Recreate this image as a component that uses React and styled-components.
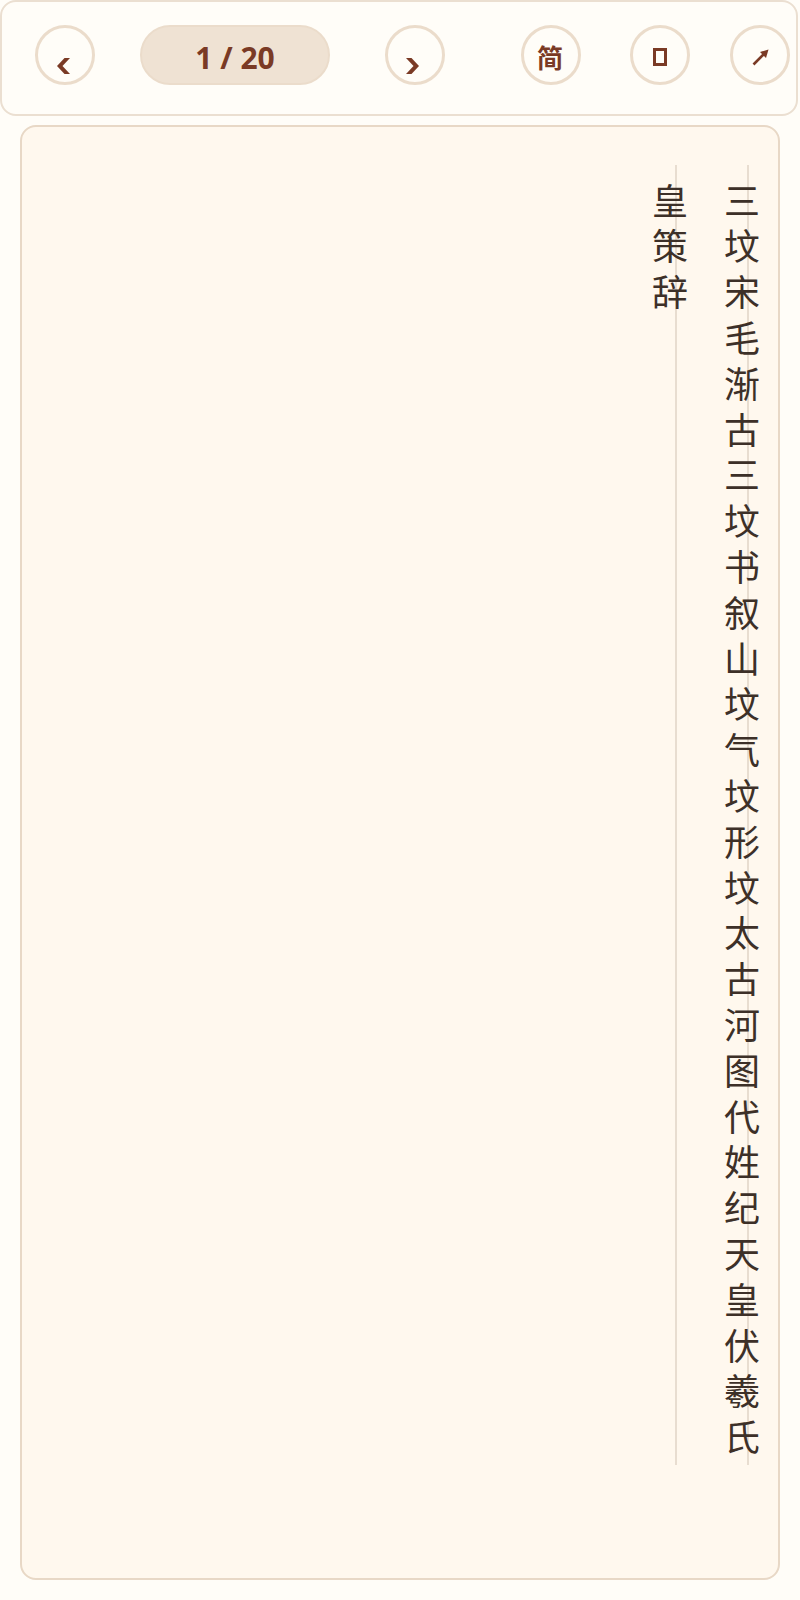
import React from "react";
import styled, { createGlobalStyle } from "styled-components";

const Global = createGlobalStyle`
  html, body { margin: 0; padding: 0; background: #fffdf8; }
  body { font-family: "Noto Sans", "Noto Sans CJK SC", sans-serif; }
  * { box-sizing: border-box; }
`;

const Page = styled.div`
  width: 800px;
  min-height: 1600px;
  background: #fffdf8;
`;

const Toolbar = styled.div`
  width: 798px;
  height: 116px;
  border: 2px solid #ebdfd1;
  border-radius: 16px;
  background: #fffdf8;
  display: flex;
  align-items: center;
  padding: 0 0 6px 33px;
`;

const RoundButton = styled.button`
  flex: none;
  width: 60px;
  height: 60px;
  margin-left: ${(p) => p.$gap || 0}px;
  border-radius: 50%;
  border: 3px solid #ebdccb;
  background: #fffdf8;
  color: #7a3a25;
  display: flex;
  align-items: center;
  justify-content: center;
  padding: ${(p) => p.$pad || "0"};
  font-family: "Noto Sans CJK SC", sans-serif;
  font-weight: 700;
  font-size: 26px;
  line-height: 1;
  cursor: pointer;
`;

const PagePill = styled.div`
  flex: none;
  width: 190px;
  height: 60px;
  margin-left: ${(p) => p.$gap || 0}px;
  border-radius: 30px;
  border: 2px solid #ebdccb;
  background: #efe2d3;
  color: #7a3a25;
  display: flex;
  align-items: center;
  justify-content: center;
  padding-top: 6px;
  font-family: "Noto Sans", sans-serif;
  font-weight: 700;
  font-size: 30px;
  line-height: 1;
`;

const Tofu = styled.span`
  display: block;
  width: 14px;
  height: 18px;
  border: 3.5px solid #7a3a25;
  margin-top: 4px;
`;

const Card = styled.div`
  margin: 9px 20px 0 20px;
  height: 1455px;
  border: 2px solid #e8d8c6;
  border-radius: 16px;
  background: #fff8ee;
  padding-top: 38px;
  display: flex;
  flex-direction: row-reverse;
  align-items: flex-start;
`;

const Column = styled.div`
  flex: none;
  width: 72px;
  height: 1300px;
  writing-mode: vertical-rl;
  white-space: nowrap;
  font-family: "Noto Sans CJK SC", sans-serif;
  font-size: 36px;
  line-height: 72px;
  letter-spacing: 9.8px;
  color: #3d3028;
  padding-top: 18px;
  background: linear-gradient(
    to right,
    transparent 41px,
    #e8ddd0 41px,
    #e8ddd0 43px,
    transparent 43px
  );
`;

const ChevronLeft = () => (
  <svg width="13" height="16" viewBox="0 0 13 16">
    <polygon points="13,0 7.5,0 0,8 7.5,16 13,16 5.5,8" fill="#7a3a25" />
  </svg>
);

const ChevronRight = () => (
  <svg width="13" height="16" viewBox="0 0 13 16">
    <polygon points="0,0 5.5,0 13,8 5.5,16 0,16 7.5,8" fill="#7a3a25" />
  </svg>
);

const ArrowNE = () => (
  <svg width="17" height="17" viewBox="0 0 17 17">
    <line x1="1.5" y1="15.5" x2="12" y2="5" stroke="#7a3a25" strokeWidth="2.6" />
    <polygon points="16.5,0.5 8,3 14,9" fill="#7a3a25" />
  </svg>
);

export default function App() {
  return (
    <Page>
      <Global />
      <Toolbar>
        <RoundButton $pad="22px 4px 0 0" aria-label="上一页">
          <ChevronLeft />
        </RoundButton>
        <PagePill $gap={45}>1 / 20</PagePill>
        <RoundButton $gap={55} $pad="22px 5px 0 0" aria-label="下一页">
          <ChevronRight />
        </RoundButton>
        <RoundButton $gap={76} $pad="3px 2px 0 0">简</RoundButton>
        <RoundButton $gap={49}>
          <Tofu />
        </RoundButton>
        <RoundButton $gap={40} $pad="5px 0 0 0">
          <ArrowNE />
        </RoundButton>
      </Toolbar>
      <Card>
        <Column>三坟宋毛渐古三坟书叙山坟气坟形坟太古河图代姓纪天皇伏羲氏</Column>
        <Column>皇策辞</Column>
      </Card>
    </Page>
  );
}
